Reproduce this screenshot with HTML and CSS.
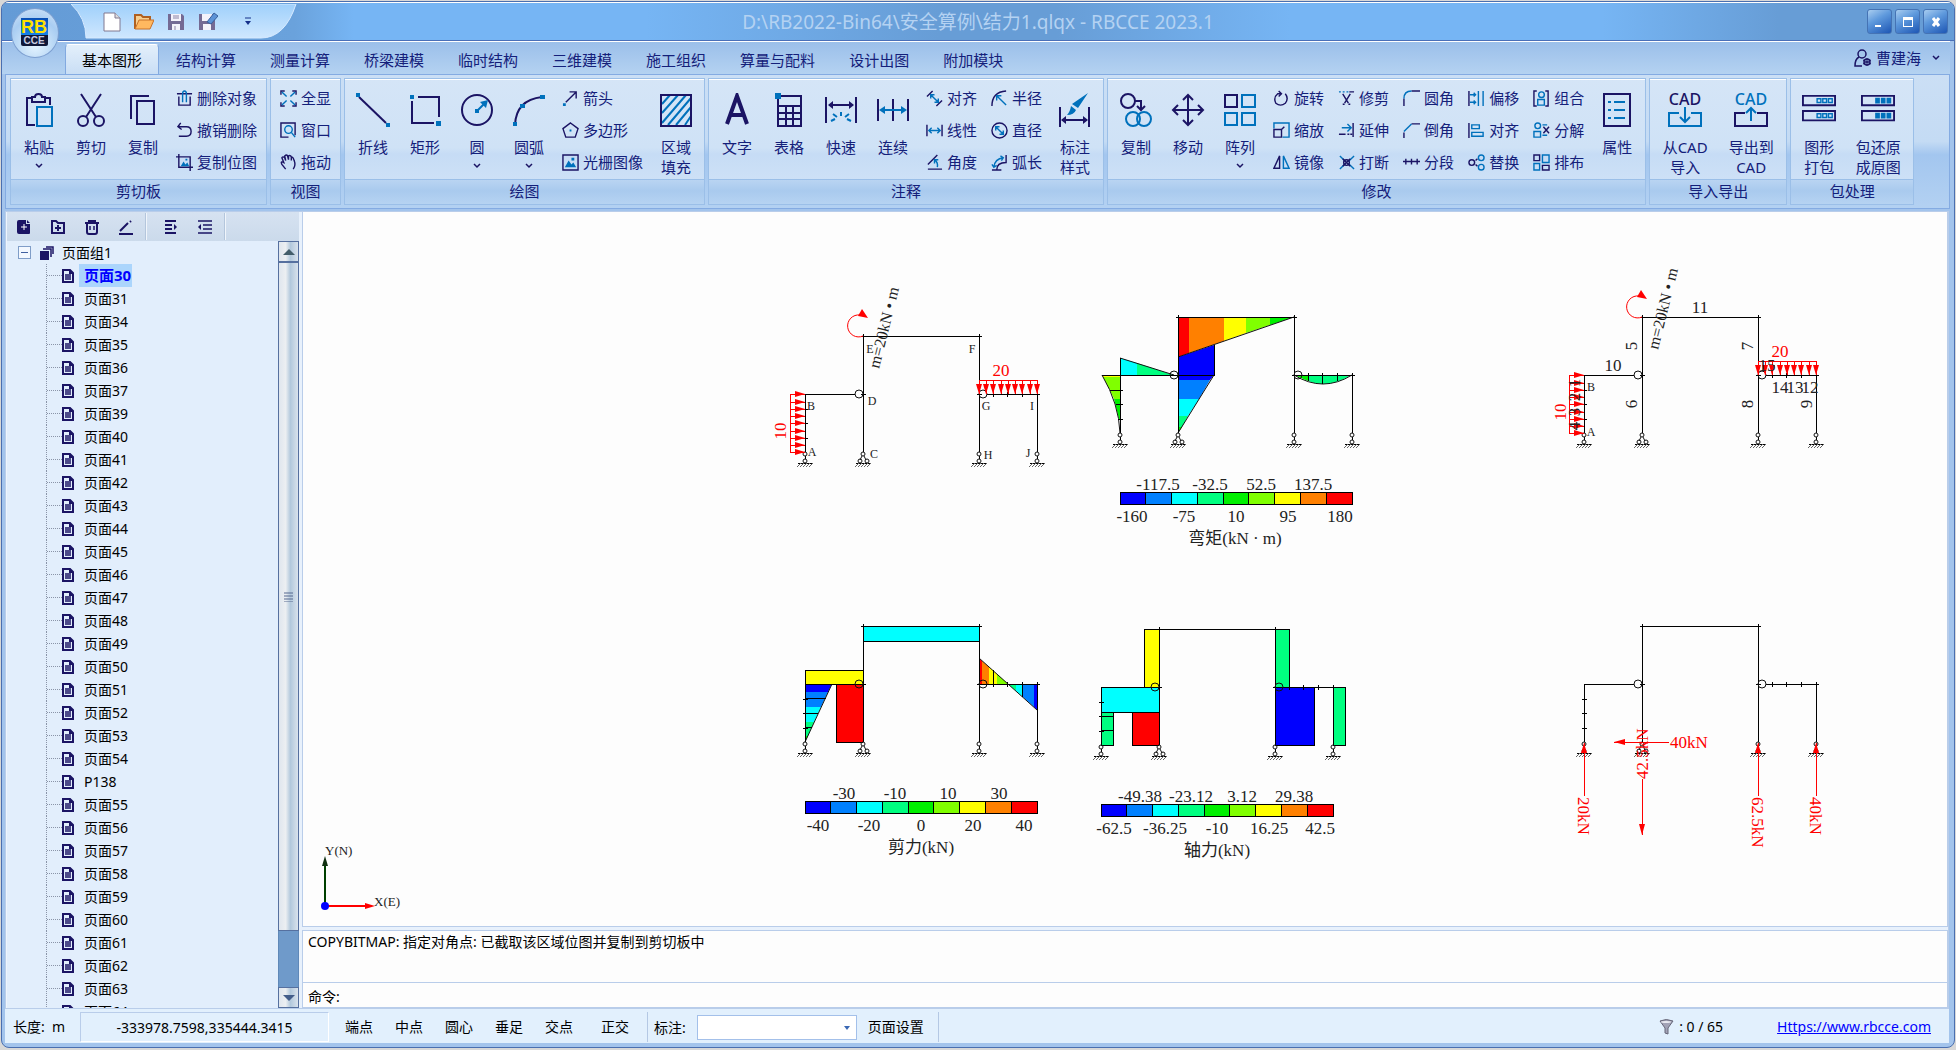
FILE: index.html
```html
<!DOCTYPE html>
<html lang="zh-CN">
<head>
<meta charset="utf-8">
<title>D:\RB2022-Bin64\安全算例\结力1.qlqx - RBCCE 2023.1</title>
<link rel="stylesheet" href="styles.css">
</head>
<body>
<svg class="sprite" aria-hidden="true">
<defs>
<!-- large ribbon icons, 34 x 34 -->
<symbol id="paste" viewBox="0 0 34 34"><path class="n" d="M9 5H5V32H13M24 5H28V12M10 9V4H13Q13 1 16.500 1T20 4H23V9Z"/><path class="b" d="M15 14H30V33H15Z"/></symbol>
<symbol id="cut" viewBox="0 0 34 34"><path class="n" d="M7 1L22 24M27 1L12 24"/><circle class="n" cx="9" cy="28" r="5"/><circle class="n" cx="25" cy="28" r="5"/></symbol>
<symbol id="copy" viewBox="0 0 34 34"><path class="n" d="M5 26V3H23M11 8H28V31H11Z"/></symbol>
<symbol id="polyline" viewBox="0 0 34 34"><path class="n" d="M3 4L30 30"/><path class="fb" d="M0 0H4V4H0ZM30 30H34V34H30Z"/></symbol>
<symbol id="rect" viewBox="0 0 34 34"><path class="n" d="M10 4H31V24M4 8V30H26"/><path class="fb" d="M2 2H6V6H2ZM28 28H33V33H28Z"/></symbol>
<symbol id="circle" viewBox="0 0 34 34"><circle class="n" cx="17" cy="17" r="15"/><path class="b" d="M17 18L26 9"/><path class="fb" d="M20 9L28 7L26 15ZM15 16H19V20H15Z"/></symbol>
<symbol id="arc" viewBox="0 0 34 34"><path class="n" d="M3 32Q4 7 30 4"/><path class="fb" d="M1 29H5V33H1ZM28 2H33V6H28ZM8 11H13V15H8Z"/></symbol>
<symbol id="hatch" viewBox="0 0 34 34"><path class="b" d="M3 11L11 2M3 20L19 2M3 30L27 2M9 32L32 5M17 32L32 14M26 32L32 23"/><path class="n" d="M2 2H32V33H2Z"/></symbol>
<symbol id="letter" viewBox="0 0 34 34"><path class="n3" d="M7 31L17 3L27 31M10 22H24"/></symbol>
<symbol id="grid" viewBox="0 0 34 34"><path class="n" d="M6 3H29V33H6ZM6 13H29M6 20H29M6 26H29M14 13V33M21 13V33"/><path class="fb" d="M3 0H9V6H3Z"/></symbol>
<symbol id="quick" viewBox="0 0 34 34"><path class="n" d="M2 4V30M32 4V30M5 12H29"/><path class="fn" d="M4 12L9 8V16ZM30 12L25 8V16Z"/><path class="b" d="M7 28L11 26M9 21L13 24M17 19V23M25 21L21 24M27 28L23 26"/></symbol>
<symbol id="chain" viewBox="0 0 34 34"><path class="n" d="M2 6V28M32 6V28M17 6V28"/><path class="b" d="M5 17H29"/><path class="fb" d="M3 17L9 13V21ZM31 17L25 13V21Z"/></symbol>
<symbol id="dimstyle" viewBox="0 0 34 34"><path class="n" d="M2 14V34M31 14V34M5 27H28"/><path class="fn" d="M3 27L8 23V31ZM30 27L25 23V31Z"/><path class="fb" d="M30 0L20 15L14 11ZM13 13L18 17Q16 22 9 22Q12 19 13 13Z"/></symbol>
<symbol id="mcopy" viewBox="0 0 34 34"><circle class="n" cx="9" cy="8" r="7"/><path class="n" d="M16 8H22V16M18 13L22 17L26 13"/><circle class="b" cx="14" cy="26" r="7"/><circle class="b" cx="25" cy="26" r="7"/></symbol>
<symbol id="move" viewBox="0 0 34 34"><path class="n" d="M17 2V32M2 17H32M12 7L17 2L22 7M12 27L17 32L22 27M7 12L2 17L7 22M27 12L32 17L27 22"/></symbol>
<symbol id="array" viewBox="0 0 34 34"><path class="n" d="M2 2H14V14H2Z"/><path class="b" d="M19 2H32V14H19ZM2 20H14V32H2ZM19 20H32V32H19Z"/></symbol>
<symbol id="props" viewBox="0 0 34 34"><path class="n" d="M4 1H30V33H4Z"/><path class="b" d="M14 9H25M14 17H25M14 25H25M8 9H11M8 17H11M8 25H11"/></symbol>
<symbol id="cadin" viewBox="0 0 34 34"><text class="cad navy" x="17" y="12">CAD</text><path class="b" d="M11 20H1V33H33V20H23M17 14V29M12 24L17 29L22 24"/></symbol>
<symbol id="cadout" viewBox="0 0 34 34"><text class="cad blue" x="17" y="12">CAD</text><path class="n" d="M11 20H1V33H33V20H23"/><path class="b" d="M17 28V15M12 20L17 15L22 20"/></symbol>
<symbol id="pack" viewBox="0 0 36 34"><path class="n" d="M1 2H35V12H1ZM1 18H35V28H1Z"/><path class="b1" d="M16 5H20V9H16ZM22 5H26V9H22ZM28 5H32V9H28ZM16 21H20V25H16ZM22 21H26V25H22ZM28 21H32V25H28Z"/></symbol>
<symbol id="unpack" viewBox="0 0 36 34"><path class="n" d="M1 2H35V12H1ZM1 18H35V28H1Z"/><path class="fb" d="M15 4H20V10H15ZM21 4H26V10H21ZM27 4H32V10H27ZM15 20H20V26H15ZM21 20H26V26H21ZM27 20H32V26H27Z"/></symbol>
<!-- small ribbon icons, 18 x 18 -->
<symbol id="del" viewBox="0 0 18 18"><path class="n1" d="M1 4H17M3 7V16H15V7"/><path class="b1" d="M7 13V4Q7 1 9 1T11 4V13"/></symbol>
<symbol id="undo" viewBox="0 0 18 18"><path class="n1" d="M5 1L2 5L6 8M2 5H11Q16 5 16 10T11 15H3"/></symbol>
<symbol id="cropimg" viewBox="0 0 18 18"><path class="n1" d="M3 0V14H18M0 3H15V18"/><path class="fb" d="M5 13L8 8L10 11L12 9L14 13ZM10 5H12V7H10Z"/></symbol>
<symbol id="full" viewBox="0 0 18 18"><path class="n1" d="M1 5V1H5M13 1H17V5M1 13V17H5M13 17H17V13"/><path class="b1" d="M2 2L7 7M16 2L11 7M2 16L7 11M16 16L11 11"/></symbol>
<symbol id="win" viewBox="0 0 18 18"><path class="n1" d="M9 16H1V1H16V14"/><circle class="b1" cx="9" cy="8" r="4"/><path class="b1" d="M12 11L16 16"/></symbol>
<symbol id="hand" viewBox="0 0 18 18"><path class="n1" d="M6 16L2 11Q0 7 4 9L2 4Q3 2 5 4L6 7L5 2Q7 0 8 2L9 6V2Q11 1 12 3L12 7M12 3Q14 3 15 7Q17 12 14 16"/></symbol>
<symbol id="arrow" viewBox="0 0 18 18"><path class="n1" d="M4 13L15 2M8 2H15V9"/><path class="fb" d="M1 14H4V17H1Z"/></symbol>
<symbol id="poly" viewBox="0 0 18 18"><path class="n1" d="M9 1L17 7L14 16H4L1 7Z"/><path class="fb" d="M8 8H10V10H8Z"/></symbol>
<symbol id="img" viewBox="0 0 18 18"><path class="n1" d="M1 1H17V17H1Z"/><path class="fb" d="M3 14L7 7L10 11L12 9L15 14ZM10 4H13V7H10Z"/></symbol>
<symbol id="dalign" viewBox="0 0 18 18"><path class="n1" d="M1 7L7 1M11 17L17 11"/><path class="b1" d="M5 5L13 13M5 9V5H9M13 9V13H9"/></symbol>
<symbol id="dlin" viewBox="0 0 18 18"><path class="n1" d="M1 3V15M17 3V15"/><path class="b1" d="M3 9H15M6 6L3 9L6 12M12 6L15 9L12 12"/></symbol>
<symbol id="dang" viewBox="0 0 18 18"><path class="n1" d="M12 1L2 11M2 16H17"/><path class="b1" d="M9 6Q13 9 12 14M9 10V6H13"/></symbol>
<symbol id="drad" viewBox="0 0 18 18"><path class="n1" d="M1 17Q1 2 16 1"/><path class="b1" d="M6 6L16 16M6 11V6H11"/></symbol>
<symbol id="ddia" viewBox="0 0 18 18"><circle class="n1" cx="9" cy="9" r="8"/><path class="b1" d="M5 5L13 13M5 9V5H9M9 13H13V9"/></symbol>
<symbol id="darc" viewBox="0 0 18 18"><path class="n1" d="M1 17H11M6 17Q6 9 16 9V1"/><path class="b1" d="M3 14Q4 5 13 4M10 2L13 4L11 7M1 11L3 14L6 12"/></symbol>
<symbol id="rot" viewBox="0 0 18 18"><path class="n1" d="M13 4Q17 9 13 14Q8 18 3 14Q0 8 5 4H9M6 1L9 4L6 7"/></symbol>
<symbol id="scale" viewBox="0 0 18 18"><path class="b1" d="M1 7V1H17V16H10"/><path class="n1" d="M1 8H9V16H1ZM9 8L12 5"/></symbol>
<symbol id="mirror" viewBox="0 0 18 18"><path class="n1" d="M7 2V15H1Z"/><path class="b1" d="M11 2V15H17Z"/></symbol>
<symbol id="trim" viewBox="0 0 18 18"><path class="b1" d="M1 2H3M5 2H7M9 2H11"/><path class="n1" d="M12 2H17M5 4L11 14M13 4L7 14M5 15H7M11 15H13"/></symbol>
<symbol id="extend" viewBox="0 0 18 18"><path class="b1" d="M4 6H13M10 2L14 6L10 10"/><path class="n1" d="M16 1V16M1 13H8M10 13H12M13 13H15"/></symbol>
<symbol id="brk" viewBox="0 0 18 18"><path class="b1" d="M2 2L8 8M17 2L11 8M2 16L8 10M17 16L11 10"/><path class="n1" d="M5 5L13 13M13 5L5 13"/><circle class="n1" cx="9" cy="9" r="3"/></symbol>
<symbol id="fillet" viewBox="0 0 18 18"><path class="n1" d="M1 17V9M9 1H18"/><path class="b1" d="M1 9Q1 1 9 1"/></symbol>
<symbol id="chamfer" viewBox="0 0 18 18"><path class="n1" d="M1 17V11M9 2H18"/><path class="b1" d="M1 10L9 2"/></symbol>
<symbol id="seg" viewBox="0 0 18 18"><path class="n1" d="M0 8H18M3 5V11M9 5V11M15 5V11"/></symbol>
<symbol id="offset" viewBox="0 0 18 18"><path class="n1" d="M1 1V17"/><path class="b1" d="M11 1V17M16 1V17M2 5H8M6 3L8 5L6 7M2 13H8M6 11L8 13L6 15"/></symbol>
<symbol id="malign" viewBox="0 0 18 18"><path class="n1" d="M1 1V17"/><path class="b1" d="M4 3H12V7H4ZM4 11H16V15H4Z"/></symbol>
<symbol id="swap" viewBox="0 0 18 18"><circle class="n1" cx="4" cy="9" r="3"/><circle class="b1" cx="14" cy="4" r="3"/><circle class="b1" cx="14" cy="14" r="3"/><path class="n1" d="M8 7L10 5M8 11L10 13"/></symbol>
<symbol id="group" viewBox="0 0 18 18"><path class="n1" d="M4 1H1V17H4M13 1H16V17H13"/><circle class="b1" cx="9" cy="5" r="3"/><path class="b1" d="M5 10H12V16H5Z"/></symbol>
<symbol id="ungroup" viewBox="0 0 18 18"><circle class="b1" cx="5" cy="4" r="3"/><path class="b1" d="M1 10H8V16H1ZM10 3H15M10 14H15"/><path class="n1" d="M11 5L17 12M17 5L11 12"/></symbol>
<symbol id="layout" viewBox="0 0 18 18"><path class="n1" d="M1 1H7V7H1ZM10 12H17V17H10Z"/><path class="b1" d="M10 1H17V9H10ZM1 10H7V17H1Z"/></symbol>
<symbol id="chev" viewBox="0 0 8 8"><path class="n1" d="M1 2L4 5L7 2"/></symbol>
<symbol id="page" viewBox="0 0 12 14"><path class="n" d="M1 1H8L11 4V13H1Z"/><path class="n1" d="M3 6H9M3 8H9M3 10H9"/><path class="fn" d="M7 0L12 5H7Z"/></symbol>

<!-- structural supports and frame, origin at the upper left corner of the frame -->
<g id="ground"><path class="k" d="M-7 0H8"/><path class="h" d="M-4 0L-8 4M-1 0L-5 4M2 0L-2 4M5 0L1 4M8 0L4 4"/></g>
<g id="link"><path class="k" d="M0 4V7"/><circle class="ka" cy="2" r="2"/><circle class="ka" cy="9" r="2"/><use href="#ground" y="11"/></g>
<g id="pin"><path class="ka" d="M-1 4L-3 8M1 4L3 8"/><circle class="ka" cy="2" r="2"/><circle class="ka" cx="-3" cy="9" r="2"/><circle class="ka" cx="4" cy="9" r="2"/><use href="#ground" y="11"/></g>
<g id="frame"><path class="k" d="M0 116V58H50M58 116V0H174V116M182 58H232V116M-2 73H3M-2 87H3M-2 102H3M188 56V61M202 56V61M217 56V61M56 0H61M58 -2V3M172 0H177M174 -2V3M172 58H177M56 58H61M230 58H235M232 56V61"/><use href="#link" y="116"/><use href="#pin" x="58" y="116"/><use href="#link" x="174" y="116"/><use href="#link" x="232" y="116"/></g>
<g id="hinges"><circle class="ka" cx="54" cy="58" r="4"/><circle class="ka" cx="178" cy="58" r="4"/></g>
<g id="ar"><path class="r" d="M-15 0H0"/><path class="fr" d="M-10 -3L0 0L-10 3Z"/></g>
<g id="ad"><path class="r" d="M0 -14V0"/><path class="fr" d="M-3 -10L0 0L3 -10Z"/></g>
<g id="loads"><path class="r" d="M-15 58V116M174 44H232"/><use href="#ar" y="58"/><use href="#ar" y="66"/><use href="#ar" y="73"/><use href="#ar" y="80"/><use href="#ar" y="87"/><use href="#ar" y="95"/><use href="#ar" y="102"/><use href="#ar" y="109"/><use href="#ar" y="116"/><use href="#ad" x="174" y="58"/><use href="#ad" x="181" y="58"/><use href="#ad" x="188" y="58"/><use href="#ad" x="196" y="58"/><use href="#ad" x="203" y="58"/><use href="#ad" x="210" y="58"/><use href="#ad" x="217" y="58"/><use href="#ad" x="225" y="58"/><use href="#ad" x="232" y="58"/><path class="ra" d="M58 0A11 11 0 1 1 55 -21"/><path class="fr" d="M53 -20L57 -27L63 -18Z"/><text class="v" transform="translate(74 33) rotate(-76)">m=20kN • m</text></g>
<g id="scalebar"><path class="c1" d="M0 0H25V12H0Z"/><path class="c2" d="M25 0H51V12H25Z"/><path class="c3" d="M51 0H77V12H51Z"/><path class="c4" d="M77 0H103V12H77Z"/><path class="c5" d="M103 0H128V12H103Z"/><path class="c6" d="M128 0H154V12H128Z"/><path class="c7" d="M154 0H180V12H154Z"/><path class="c8" d="M180 0H206V12H180Z"/><path class="c9" d="M206 0H232V12H206Z"/><path class="k" d="M0 0H232V12H0ZM25 0V12M51 0V12M77 0V12M103 0V12M128 0V12M154 0V12M180 0V12M206 0V12"/></g>
</defs>
</svg>

<div class="window">
<header class="titlebar">
  <button class="app" aria-label="RBCCE"><svg width="46" height="48"><defs><linearGradient id="lg" x2="0" y2="1"><stop stop-color="#0a4fb4"/><stop offset="1" stop-color="#1683e8"/></linearGradient></defs><rect x="9" y="9" width="27" height="28" rx="2" fill="#101838"/><path d="M9 9H36V26H9Z" fill="url(#lg)"/><text class="rb" x="22" y="24">RB</text><text class="cce" x="22" y="35">CCE</text></svg></button>
  <div class="quick">
    <svg class="quickshape" viewBox="0 0 228 35" preserveAspectRatio="none"><defs><linearGradient id="qg" x2="0" y2="1"><stop stop-color="#9fd0fb"/><stop offset="1" stop-color="#cfe7fe"/></linearGradient></defs><path d="M0 0H225Q214 34 190 34H15Q15 14 0 0Z" fill="url(#qg)" stroke="#d7eaff"/></svg>
    <button aria-label="新建"><svg width="20" height="20"><path d="M2 1H13L18 6V19H2Z" fill="#fff" stroke="#807890"/><path d="M13 1V6H18" fill="#ddd" stroke="#807890"/></svg></button>
    <button aria-label="打开"><svg width="20" height="20"><path d="M1 17V3H7L9 5H16V8" fill="#f8d090" stroke="#b06020" stroke-width="2"/><path d="M1 17L5 8H20L16 17Z" fill="#ffb860" stroke="#c87028"/></svg></button>
    <button aria-label="保存"><svg width="20" height="20"><path d="M2 2H16L18 4V18H2Z" fill="#746a94"/><path d="M5 2H15V9H5ZM6 12H14V18H6Z" fill="#f4f2fa"/><path d="M7 4H13M7 6H13M9 14V18" stroke="#8b83a6"/></svg></button>
    <button aria-label="另存为"><svg width="20" height="20"><path d="M1 2H15L17 4V18H1Z" fill="#746a94"/><path d="M4 2H14V9H4ZM5 12H13V18H5Z" fill="#f4f2fa"/><path d="M9 10L16 1L20 4L13 12Z" fill="#5c92d6" stroke="#395f9b"/></svg></button>
    <button class="more" aria-label="自定义"><svg width="8" height="9"><path d="M1 1H7" stroke="#15308a"/><path d="M1 4H7L4 8Z" fill="#15308a"/></svg></button>
  </div>
  <h1>D:\RB2022-Bin64\安全算例\结力1.qlqx - RBCCE 2023.1</h1>
  <div class="winbtns">
    <button aria-label="最小化"><svg width="12" height="12"><path d="M1 9H7V11H1Z" fill="#fff"/></svg></button>
    <button aria-label="最大化"><svg width="12" height="12"><path d="M1 1H11V11H1ZM2 4V10H10V4Z" fill="#fff" fill-rule="evenodd"/></svg></button>
    <button aria-label="关闭"><svg width="12" height="12"><path d="M3 2L9 10M9 2L3 10" stroke="#fff" stroke-width="3"/></svg></button>
  </div>
</header>

<nav class="tabs">
  <button class="on">基本图形</button><button>结构计算</button><button>测量计算</button><button>桥梁建模</button><button>临时结构</button><button>三维建模</button><button>施工组织</button><button>算量与配料</button><button>设计出图</button><button>附加模块</button>
  <button class="user"><svg width="18" height="18"><circle class="n1" cx="8" cy="5" r="4"/><path class="n1" d="M5 8Q1 10 1 17H8"/><circle class="n1" cx="13" cy="13" r="3"/><path class="d1" d="M13 9V17M9 11L17 15M17 11L9 15"/></svg>曹建海<svg class="chev"><use href="#chev"/></svg></button>
</nav>

<div class="ribbon">
  <section class="group"><div class="tools">
    <button class="big"><svg><use href="#paste"/></svg>粘贴<svg class="chev"><use href="#chev"/></svg></button>
    <button class="big"><svg><use href="#cut"/></svg>剪切</button>
    <button class="big"><svg><use href="#copy"/></svg>复制</button>
    <div class="col"><button><svg><use href="#del"/></svg>删除对象</button><button><svg><use href="#undo"/></svg>撤销删除</button><button><svg><use href="#cropimg"/></svg>复制位图</button></div>
  </div><h2>剪切板</h2></section>
  <section class="group"><div class="tools">
    <div class="col"><button><svg><use href="#full"/></svg>全显</button><button><svg><use href="#win"/></svg>窗口</button><button><svg><use href="#hand"/></svg>拖动</button></div>
  </div><h2>视图</h2></section>
  <section class="group"><div class="tools">
    <button class="big"><svg><use href="#polyline"/></svg>折线</button>
    <button class="big"><svg><use href="#rect"/></svg>矩形</button>
    <button class="big"><svg><use href="#circle"/></svg>圆<svg class="chev"><use href="#chev"/></svg></button>
    <button class="big"><svg><use href="#arc"/></svg>圆弧<svg class="chev"><use href="#chev"/></svg></button>
    <div class="col"><button><svg><use href="#arrow"/></svg>箭头</button><button><svg><use href="#poly"/></svg>多边形</button><button><svg><use href="#img"/></svg>光栅图像</button></div>
    <button class="big"><svg><use href="#hatch"/></svg>区域<br>填充</button>
  </div><h2>绘图</h2></section>
  <section class="group"><div class="tools">
    <button class="big"><svg><use href="#letter"/></svg>文字</button>
    <button class="big"><svg><use href="#grid"/></svg>表格</button>
    <button class="big"><svg><use href="#quick"/></svg>快速</button>
    <button class="big"><svg><use href="#chain"/></svg>连续</button>
    <div class="col"><button><svg><use href="#dalign"/></svg>对齐</button><button><svg><use href="#dlin"/></svg>线性</button><button><svg><use href="#dang"/></svg>角度</button></div>
    <div class="col"><button><svg><use href="#drad"/></svg>半径</button><button><svg><use href="#ddia"/></svg>直径</button><button><svg><use href="#darc"/></svg>弧长</button></div>
    <button class="big"><svg><use href="#dimstyle"/></svg>标注<br>样式</button>
  </div><h2>注释</h2></section>
  <section class="group"><div class="tools">
    <button class="big"><svg><use href="#mcopy"/></svg>复制</button>
    <button class="big"><svg><use href="#move"/></svg>移动</button>
    <button class="big"><svg><use href="#array"/></svg>阵列<svg class="chev"><use href="#chev"/></svg></button>
    <div class="col"><button><svg><use href="#rot"/></svg>旋转</button><button><svg><use href="#scale"/></svg>缩放</button><button><svg><use href="#mirror"/></svg>镜像</button></div>
    <div class="col"><button><svg><use href="#trim"/></svg>修剪</button><button><svg><use href="#extend"/></svg>延伸</button><button><svg><use href="#brk"/></svg>打断</button></div>
    <div class="col"><button><svg><use href="#fillet"/></svg>圆角</button><button><svg><use href="#chamfer"/></svg>倒角</button><button><svg><use href="#seg"/></svg>分段</button></div>
    <div class="col"><button><svg><use href="#offset"/></svg>偏移</button><button><svg><use href="#malign"/></svg>对齐</button><button><svg><use href="#swap"/></svg>替换</button></div>
    <div class="col"><button><svg><use href="#group"/></svg>组合</button><button><svg><use href="#ungroup"/></svg>分解</button><button><svg><use href="#layout"/></svg>排布</button></div>
    <button class="big"><svg><use href="#props"/></svg>属性</button>
  </div><h2>修改</h2></section>
  <section class="group"><div class="tools">
    <button class="big wide"><svg><use href="#cadin"/></svg>从CAD<br>导入</button>
    <button class="big wide"><svg><use href="#cadout"/></svg>导出到<br>CAD</button>
  </div><h2>导入导出</h2></section>
  <section class="group"><div class="tools">
    <button class="big"><svg><use href="#pack"/></svg>图形<br>打包</button>
    <button class="big wide"><svg><use href="#unpack"/></svg>包还原<br>成原图</button>
  </div><h2>包处理</h2></section>
</div>

<main>
<aside>
  <div class="treebar">
    <button aria-label="新建页面"><svg width="16" height="16"><path class="fn" d="M1 3Q1 1 3 1H10V5H14V14Q14 15 13 15H3Q1 15 1 13ZM11 1L14 4H11Z"/><path d="M8 5V11M5 8H11" stroke="#fff"/></svg></button>
    <button aria-label="新建组"><svg width="16" height="16"><path class="n" d="M2 2H6L8 4H14V14H2ZM8 6V12M5 9H11"/></svg></button>
    <button aria-label="删除"><svg width="16" height="16"><path class="n" d="M1 4H15M3 4V13Q3 15 5 15H11Q13 15 13 13V4M5 4V2H11V4"/><path class="n1" d="M6 7V11M10 7V11"/></svg></button>
    <button aria-label="编辑"><svg width="16" height="16"><path class="n" d="M1 15H15M2 12L10 4M12 3L13 2"/></svg></button>
    <i></i>
    <button aria-label="缩进"><svg width="16" height="16"><path class="n" d="M2 2H13M2 6H9M2 10H9M2 14H13"/><path class="fn" d="M11 5L14 8L11 11Z"/></svg></button>
    <button aria-label="凸出"><svg width="16" height="16"><path class="n1" d="M1 2H15M6 6H15M6 10H15M1 14H15"/><path class="fn" d="M4 5L1 8L4 11Z"/></svg></button>
    <i class="last"></i>
  </div>
  <div class="treewrap">
    <div class="tree">
      <a class="root" href="#"><span class="minus"></span><svg width="14" height="14"><path class="fn" d="M0 5H9V14H0Z"/><path class="n1" d="M3 3H11V11M6 1H13V8"/></svg>页面组1</a>
      <ul>
        <li class="sel"><a href="#"><svg><use href="#page"/></svg><span>页面30</span></a></li>
        <li><a href="#"><svg><use href="#page"/></svg><span>页面31</span></a></li>
        <li><a href="#"><svg><use href="#page"/></svg><span>页面34</span></a></li>
        <li><a href="#"><svg><use href="#page"/></svg><span>页面35</span></a></li>
        <li><a href="#"><svg><use href="#page"/></svg><span>页面36</span></a></li>
        <li><a href="#"><svg><use href="#page"/></svg><span>页面37</span></a></li>
        <li><a href="#"><svg><use href="#page"/></svg><span>页面39</span></a></li>
        <li><a href="#"><svg><use href="#page"/></svg><span>页面40</span></a></li>
        <li><a href="#"><svg><use href="#page"/></svg><span>页面41</span></a></li>
        <li><a href="#"><svg><use href="#page"/></svg><span>页面42</span></a></li>
        <li><a href="#"><svg><use href="#page"/></svg><span>页面43</span></a></li>
        <li><a href="#"><svg><use href="#page"/></svg><span>页面44</span></a></li>
        <li><a href="#"><svg><use href="#page"/></svg><span>页面45</span></a></li>
        <li><a href="#"><svg><use href="#page"/></svg><span>页面46</span></a></li>
        <li><a href="#"><svg><use href="#page"/></svg><span>页面47</span></a></li>
        <li><a href="#"><svg><use href="#page"/></svg><span>页面48</span></a></li>
        <li><a href="#"><svg><use href="#page"/></svg><span>页面49</span></a></li>
        <li><a href="#"><svg><use href="#page"/></svg><span>页面50</span></a></li>
        <li><a href="#"><svg><use href="#page"/></svg><span>页面51</span></a></li>
        <li><a href="#"><svg><use href="#page"/></svg><span>页面52</span></a></li>
        <li><a href="#"><svg><use href="#page"/></svg><span>页面53</span></a></li>
        <li><a href="#"><svg><use href="#page"/></svg><span>页面54</span></a></li>
        <li><a href="#"><svg><use href="#page"/></svg><span>P138</span></a></li>
        <li><a href="#"><svg><use href="#page"/></svg><span>页面55</span></a></li>
        <li><a href="#"><svg><use href="#page"/></svg><span>页面56</span></a></li>
        <li><a href="#"><svg><use href="#page"/></svg><span>页面57</span></a></li>
        <li><a href="#"><svg><use href="#page"/></svg><span>页面58</span></a></li>
        <li><a href="#"><svg><use href="#page"/></svg><span>页面59</span></a></li>
        <li><a href="#"><svg><use href="#page"/></svg><span>页面60</span></a></li>
        <li><a href="#"><svg><use href="#page"/></svg><span>页面61</span></a></li>
        <li><a href="#"><svg><use href="#page"/></svg><span>页面62</span></a></li>
        <li><a href="#"><svg><use href="#page"/></svg><span>页面63</span></a></li>
        <li><a href="#"><svg><use href="#page"/></svg><span>页面64</span></a></li>
      </ul>
    </div>
    <div class="scroll">
      <button aria-label="向上"><svg width="12" height="6"><path d="M0 6L6 0L12 6Z" fill="#435d6a"/></svg></button>
      <div class="thumb"><svg width="9" height="10"><path d="M0 1H9M0 4H9M0 7H9M0 10H9" stroke="#56698f"/></svg></div>
      <div class="track"></div>
      <button aria-label="向下"><svg width="12" height="6"><path d="M0 0L6 6L12 0Z" fill="#435d8a"/></svg></button>
    </div>
  </div>
</aside>

<div class="work">
<div class="canvas">
<svg class="drawing">
<g transform="translate(-303 -212)">
  <!-- structure with loads and node names -->
  <g transform="translate(805 336)"><use href="#frame"/><use href="#hinges"/><use href="#loads"/></g>
  <g class="node"><text x="870" y="353">E</text><text x="972" y="353">F</text><text x="872" y="405">D</text><text x="811" y="410">B</text><text x="986" y="410">G</text><text x="1032" y="410">I</text><text x="812" y="456">A</text><text x="874" y="458">C</text><text x="988" y="459">H</text><text x="1028" y="457">J</text></g>
  <g class="red"><text x="1001" y="376">20</text><text transform="translate(786 431) rotate(-90)">10</text></g>

  <!-- bending moment -->
  <g transform="translate(1120 317)">
    <path class="c9" d="M58 0H69V36L58 40Z"/><path class="c8" d="M69 0H104V24L69 36Z"/><path class="c7" d="M104 0H126V16L104 24Z"/><path class="c6" d="M126 0H150V8L126 16Z"/><path class="c5" d="M150 0H174L150 8Z"/>
    <path class="c1" d="M58 40L94 28V58L90 63H58Z"/><path class="c2" d="M58 63H90L79 82H58Z"/><path class="c3" d="M58 82H79L68 99H58Z"/><path class="c4" d="M58 99H68L62 110H58Z"/><path class="c5" d="M58 110H62L58 116Z"/>
    <path class="c3" d="M0 41L17 46V58H0Z"/><path class="c4" d="M17 46L53 58H17Z"/>
    <path class="c7" d="M-18 58H0V60H-17Z"/><path class="c6" d="M-17 60H0V82H-6L-10 73Z"/><path class="c5" d="M-6 82H0V102H-1Z"/>
    <path class="c5" d="M174 58H188V64Z"/><path class="c4" d="M188 58H231Q217 67 202 67Q195 67 188 64Z"/>
    <path class="ka" d="M58 40L174 0M58 116L94 58M0 41L54 58M-18 58Q-1 87 0 116M174 58Q203 76 232 58"/>
    <path class="k" d="M94 28V58H50M0 41V58H-18M-10 73H0M-4 87H0M188 58V64M202 58V67M217 58V64M174 58H182"/>
    <use href="#frame"/><use href="#hinges"/>
  </g>
  <g transform="translate(1120 492)" class="legend"><use href="#scalebar"/><text x="38" y="-2">-117.5</text><text x="90" y="-2">-32.5</text><text x="141" y="-2">52.5</text><text x="193" y="-2">137.5</text><text x="12" y="30">-160</text><text x="64" y="30">-75</text><text x="116" y="30">10</text><text x="168" y="30">95</text><text x="220" y="30">180</text><text x="115" y="52">弯矩(kN · m)</text></g>

  <!-- structure with member numbers -->
  <g transform="translate(1584 317)"><use href="#frame"/><use href="#hinges"/><use href="#loads"/></g>
  <g class="node"><text x="1591" y="391">B</text><text x="1591" y="436">A</text></g>
  <g class="legend"><text x="1700" y="313">11</text><text x="1613" y="371">10</text><text x="1767" y="371">15</text><text x="1780" y="393">14</text><text x="1795" y="393">13</text><text x="1810" y="393">12</text><text transform="translate(1637 346) rotate(-90)">5</text><text transform="translate(1637 404) rotate(-90)">6</text><text transform="translate(1753 346) rotate(-90)">7</text><text transform="translate(1753 404) rotate(-90)">8</text><text transform="translate(1812 404) rotate(-90)">9</text><text transform="translate(1580 383) rotate(-90)">1</text><text transform="translate(1580 397) rotate(-90)">2</text><text transform="translate(1580 412) rotate(-90)">3</text><text transform="translate(1580 426) rotate(-90)">4</text></g>
  <g class="red"><text x="1780" y="357">20</text><text transform="translate(1566 412) rotate(-90)">10</text></g>

  <!-- shear force -->
  <g transform="translate(805 626)">
    <path class="c3" d="M58 0H174V15H58Z"/><path class="c7" d="M0 44H58V58H0Z"/><path class="c9" d="M31 58H58V116H31Z"/>
    <path class="c1" d="M0 58H27L23 66H0Z"/><path class="c2" d="M0 66H23L16 81H0Z"/><path class="c3" d="M0 81H16L9 96H0Z"/><path class="c4" d="M0 96H9L3 110H0Z"/><path class="c5" d="M0 110H3L0 116Z"/>
    <path class="c9" d="M174 32L177 35V58H174Z"/><path class="c8" d="M177 35L184 41V58H177Z"/><path class="c7" d="M184 41L192 48V58H184Z"/><path class="c6" d="M192 48L203 58H192Z"/>
    <path class="c4" d="M203 58H211V65Z"/><path class="c3" d="M211 58H218V71L211 65Z"/><path class="c2" d="M218 58H229V81L218 71Z"/><path class="c1" d="M229 58H232V84L229 81Z"/>
    <path class="ka" d="M27 58L0 116M174 32L232 84"/>
    <path class="k" d="M58 15H174M0 58V44H58M31 58V116H58M50 58H58M0 72H21M0 87H13M0 101H7M188 44V58M217 58V71M232 58V84M174 58H182"/>
    <use href="#frame"/><use href="#hinges"/>
  </g>
  <g transform="translate(805 801)" class="legend"><use href="#scalebar"/><text x="39" y="-2">-30</text><text x="90" y="-2">-10</text><text x="143" y="-2">10</text><text x="194" y="-2">30</text><text x="13" y="30">-40</text><text x="64" y="30">-20</text><text x="116" y="30">0</text><text x="168" y="30">20</text><text x="219" y="30">40</text><text x="116" y="52">剪力(kN)</text></g>

  <!-- axial force -->
  <g transform="translate(1101 629)">
    <path class="c7" d="M43 0H58V58H43Z"/><path class="c4" d="M174 0H188V58H174ZM0 83H12V116H0ZM232 58H244V116H232Z"/><path class="c3" d="M0 58H58V83H0Z"/><path class="c9" d="M31 83H58V116H31Z"/><path class="c1" d="M174 58H213V116H174Z"/>
    <path class="k" d="M58 0H43V58M174 0H188V58M0 83H58M12 83V116H0M31 83V116H58M174 116H213V58M232 58H244V116H232M0 87H12M0 101H12M50 58H58M174 58H182"/>
    <use href="#frame"/><use href="#hinges"/>
  </g>
  <g transform="translate(1101 804)" class="legend"><use href="#scalebar"/><text x="39" y="-2">-49.38</text><text x="90" y="-2">-23.12</text><text x="141" y="-2">3.12</text><text x="193" y="-2">29.38</text><text x="13" y="30">-62.5</text><text x="64" y="30">-36.25</text><text x="116" y="30">-10</text><text x="168" y="30">16.25</text><text x="219" y="30">42.5</text><text x="116" y="52">轴力(kN)</text></g>

  <!-- support reactions -->
  <g transform="translate(1584 626)"><use href="#frame"/><use href="#hinges"/>
    <path class="r" d="M0 117V170M174 117V170M232 117V170M58 153V209M85 116H30"/>
    <path class="fr" d="M0 117L3 127H-3ZM174 117L177 127H171ZM232 117L235 127H229ZM58 209L55 198H61ZM30 116L41 113V119Z"/>
  </g>
  <g class="red start"><text x="1670" y="748">40kN</text><text transform="translate(1648 779) rotate(-90)">42.5kN</text><text transform="translate(1578 797) rotate(90)">20kN</text><text transform="translate(1752 797) rotate(90)">62.5kN</text><text transform="translate(1810 797) rotate(90)">40kN</text></g>

  <!-- coordinate axes -->
  <path d="M325 906V862" stroke="#004000" stroke-width="2"/><path d="M322 866L325 856L328 866Z" fill="#103010"/>
  <path d="M325 906H368" stroke="#f00" stroke-width="2"/><path class="fr" d="M365 903L375 906L365 909Z"/><circle cx="325" cy="906" r="4" fill="#00f"/>
  <g class="axis"><text x="325" y="855">Y(N)</text><text x="374" y="906">X(E)</text></g>
</g>
</svg>
</div>
<div class="command">
  <p>COPYBITMAP: 指定对角点: 已截取该区域位图并复制到剪切板中</p>
  <div class="prompt"><label for="cmd">命令:</label><input id="cmd" type="text"></div>
</div>
</div>
</main>

<footer>
  <span class="unit">长度:&nbsp; m</span>
  <span class="coords">-333978.7598,335444.3415</span>
  <div class="snaps"><button>端点</button><button>中点</button><button>圆心</button><button>垂足</button><button>交点</button><button>正交</button></div>
  <label class="dim" for="dim">标注:</label>
  <div class="combo"><select id="dim"><option></option></select><svg width="6" height="4"><path d="M0 0H6L3 4Z" fill="#3a68b4"/></svg></div>
  <button class="setup">页面设置</button>
  <span class="filter"><svg width="15" height="16"><path d="M1 2Q7 -1 14 2L9 9V15L6 14V9Z" fill="#a2a2b6" stroke="#666678"/><ellipse cx="7" cy="3" rx="5" ry="1" fill="#e8e8f0"/></svg>: 0 / 65</span>
  <a class="site" href="#">Https://www.rbcce.com</a>
</footer>
</div>
</body>
</html>
```
FILE: styles.css
```css
* { box-sizing: border-box; }
body {
  margin: 0; height: 100vh; padding: 1px 1px 2px 1px; background: #d8d8d8;
  font: 15px/20px "Noto Sans", "Noto Sans CJK SC", sans-serif; color: #14207a;
  display: flex;
}
button { font: inherit; color: inherit; border: 0; padding: 0; margin: 0; background: none; white-space: nowrap; }
svg { display: block; flex: none; }
.sprite { position: absolute; width: 0; height: 0; }

.window {
  flex: 1; min-width: 0; display: flex; flex-direction: column;
  border: 1px solid #4a6fb0; border-radius: 8px; overflow: hidden; background: #a3c4ec;
}

/* icon strokes */
.n, .n1, .n3, .b, .b1, .d1 { fill: none; stroke: #1b1464; stroke-width: 2; }
.n1, .b1 { stroke-width: 1.5; }
.d1 { stroke-width: 1; }
.n3 { stroke-width: 4; }
.b, .b1 { stroke: #0071bc; }
.fn { fill: #1b1464; }
.fb { fill: #0071bc; }
.cad { font: 500 16px "Noto Sans", sans-serif; text-anchor: middle; }
.navy { fill: #1b1464; }
.blue { fill: #0071bc; }

/* title bar */
.titlebar {
  height: 39px; position: relative; display: flex; align-items: center; z-index: 1;
  border-top: 1px solid #fff; border-bottom: 1px solid #4a6fb8;
  background: linear-gradient(90deg, #649bd6 0, #6aa2dc 15%, #76b5f4 18%, #76b5f4 33%, #679dd6 48%, #679dd6 54%, #76b5f4 66%, #76b5f4 82%, #679dd6 91%);
}
.app {
  position: absolute; left: 9px; top: 5px; width: 48px; height: 50px; border-radius: 50%;
  border: 1px solid #7d9fd0; background: radial-gradient(circle at 50% 75%, #e6f5ff, #a9cdf2 60%, #d5e6f8);
}
.rb { font: bold 18px "Liberation Sans", sans-serif; fill: #ffe100; text-anchor: middle; }
.cce { font: bold 10px "Liberation Sans", sans-serif; fill: #c8cce0; text-anchor: middle; }
.quick { position: relative; margin-left: 69px; width: 228px; height: 35px; display: flex; align-items: center; gap: 12px; padding-left: 31px; }
.quickshape { position: absolute; inset: 0; width: 100%; height: 100%; }
.quick button { position: relative; }
.quick .more { margin-left: 14px; }
h1 { flex: 1; margin: 0; font: 19px/36px "Noto Sans", "Noto Sans CJK SC", sans-serif; color: #b4d2f2; text-align: center; padding-right: 210px; white-space: nowrap; }
.winbtns { display: flex; gap: 3px; padding-right: 6px; }
.winbtns button {
  width: 25px; height: 25px; border-radius: 3px; display: grid; place-items: center;
  border: 1px solid #4573b4; background: linear-gradient(150deg, #a9cdf0 0, #5f9add 40%, #1d56b4);
}

/* tabs */
.tabs {
  height: 33px; display: flex; align-items: flex-end; padding-left: 63px; padding-right: 9px; margin: 0 4px 0 0;
  border-top: 1px solid #fff; background: linear-gradient(#9bbfea, #b4d2f1);
}
.tabs button { height: 30px; padding: 1px 16px 0; border: 1px solid transparent; border-bottom: 0; }
.tabs .on { color: #000; background: linear-gradient(#e3effb, #c9def5); border-color: #82a9e0; border-radius: 4px 4px 0 0; border-top-color: #fff; }
.tabs .user { margin-left: auto; display: flex; align-items: center; gap: 4px; padding: 0 0 4px; }
.user .chev { width: 8px; height: 8px; margin-left: 7px; }

/* ribbon */
.ribbon {
  margin: 0 4px 2px 3px; padding: 3px 4px 3px; display: flex; gap: 3px;
  border: 1px solid #84abe2; background: linear-gradient(#cbdff5 0, #c4dbf4 50%, #a3c6ef 60%, #b3d1f2);
}
.group { border: 1px solid #9bbfe8; display: flex; flex-direction: column; background: linear-gradient(#d5e5f7, #cfe2f6 55%, #c6dcf5 60%, #d4e5f8); }
.tools { height: 100px; padding: 0 2px; display: flex; border-top: 1px solid #fff; }
.group h2 { margin: 0; height: 25px; font: inherit; line-height: 22px; text-align: center; background: linear-gradient(#b9d4f2, #a9caee 45%, #b6d3f2); border-top: 1px solid #9bbfe8; }
.big { width: 52px; padding-top: 13px; display: block; text-align: center; align-self: flex-start; }
.wide { width: 66px; }
.big > svg { width: 34px; height: 34px; margin: 0 auto 10px; }
.big > .chev { width: 8px; height: 8px; margin: 5px auto 0; }
.col { padding-top: 2px; display: flex; flex-direction: column; }
.col button { height: 32px; padding: 0 7px; display: flex; align-items: center; gap: 4px; }
.col svg { width: 17px; height: 17px; }

/* page tree */
main { flex: 1; min-height: 0; display: flex; margin: 0 5px 0 3px; border: 1px solid #b9cdea; border-bottom: 0; }
aside { width: 293px; display: flex; flex-direction: column; background: #e2eefc; border-left: 1px solid #eef5fd; }
.treebar { height: 29px; display: flex; align-items: center; background: linear-gradient(#d6e2f1, #cbdaeb); }
.treebar button { width: 34px; height: 28px; display: grid; place-items: center; }
.treebar i { width: 2px; height: 27px; margin: 0 7px 0 2px; border-left: 1px solid #b4c6dc; background: #f0f5fb; }
.treebar .last { margin-right: 0; }
.treewrap { flex: 1; min-height: 0; display: flex; font-size: 14px; color: #000; }
.tree { flex: 1; overflow: hidden; }
.tree a { color: inherit; text-decoration: none; height: 23px; display: flex; align-items: center; }
.root { padding-left: 11px; }
.root svg { margin: 0 8px 0 1px; }
.minus { width: 13px; height: 13px; border: 1px solid #7f9dc8; background: linear-gradient(#4060a0, #4060a0) center / 7px 1px no-repeat #f3f8ff; margin-right: 8px; }
ul { margin: 0; padding: 0 0 0 39px; list-style: none; }
li { border-left: 1px dotted #8a94a8; }
li a::before { content: ""; width: 15px; border-top: 1px dotted #8a94a8; }
li svg { width: 12px; height: 14px; margin-right: 5px; }
li span { padding: 0 4px 0 5px; line-height: 23px; }
.sel span { background: #abd5fc; color: #00f; font-size: 15px; font-weight: bold; padding: 0 1px 0 5px; }

.scroll { width: 21px; display: flex; flex-direction: column; }
.scroll button, .thumb { border: 1px solid #56709f; background: linear-gradient(90deg, #dfe6ee, #eceff2 35%, #b2c8dc 60%, #d9e2ec); display: grid; place-items: center; }
.scroll button { height: 21px; }
.thumb { flex: 12; }
.track { flex: 1; background: #6f9aca; border: 1px solid #5f88b8; border-width: 0 1px; }

/* drawing and command area */
.work { flex: 1; min-width: 0; display: flex; flex-direction: column; gap: 3px; background: #e8f1fc; }
.canvas { flex: 1; min-height: 0; background: #fdfdfd; margin-left: 3px; border: 1px solid #b9cdea; border-top: 0; }
.drawing { width: 100%; height: 100%; }
.drawing text { font: 16px "Liberation Serif", "Noto Sans CJK SC", serif; fill: #222; }
.command { margin-left: 3px; height: 78px; display: flex; flex-direction: column; background: #fdfdfd; border: 1px solid #b9cdea; color: #000; font-size: 14px; }
.command p { flex: 1; margin: 0; padding: 1px 5px; border-bottom: 1px solid #b9cdea; }
.prompt { height: 24px; display: flex; align-items: center; padding: 3px 5px 0; }
.prompt input { flex: 1; border: 0; outline: 0; background: none; font: inherit; }

.k { fill: none; stroke: #000; shape-rendering: crispEdges; }
.h { fill: none; stroke: #666; }
.ka { fill: none; stroke: #111; }
.r { fill: none; stroke: #f00; shape-rendering: crispEdges; }
.ra { fill: none; stroke: #f00; }
.fr { fill: #f00; }
.c1 { fill: #0000ff; } .c2 { fill: #0080ff; } .c3 { fill: #00ffff; }
.c4 { fill: #00ff80; } .c5 { fill: #00f000; } .c6 { fill: #80ff00; }
.c7 { fill: #ffff00; } .c8 { fill: #ff8000; } .c9 { fill: #ff0000; }
.drawing .legend text, .drawing .red text { font-size: 17px; text-anchor: middle; }
.drawing .red text { fill: #f00; }
.drawing .start text { text-anchor: start; }
.drawing .node text { font-size: 12px; text-anchor: middle; }
.drawing .axis text { font-size: 13px; }
text.v { font: 16px "Liberation Serif", serif; fill: #222; }

/* status bar */
footer { height: 35px; margin: 0 5px 4px 3px; padding: 3px 0 1px 8px; display: flex; align-items: center; background: #e2f0fd; border-top: 1px solid #b9cdea; color: #000; font-size: 14px; }
.unit { width: 67px; }
.coords { align-self: stretch; width: 249px; line-height: 29px; text-align: center; border: 1px solid #fff; border-top-color: #b9cdea; border-left-color: #b9cdea; }
.snaps { display: flex; gap: 22px; padding: 0 18px 0 16px; }
.snaps button:last-child { margin-left: 6px; }
.dim { align-self: stretch; line-height: 31px; padding: 0 11px 0 6px; border-left: 1px solid #b4c8e4; }
.combo { position: relative; width: 160px; height: 25px; }
.combo select { width: 100%; height: 100%; appearance: none; border: 1px solid #a3c0ea; background: #fff; }
.combo svg { position: absolute; right: 7px; top: 11px; }
.setup { align-self: stretch; padding: 0 14px 0 11px; border-right: 1px solid #b4c8e4; }
.filter { margin-left: auto; display: flex; align-items: center; gap: 5px; margin-right: 54px; }
.site { color: #00f; margin-right: 18px; }
```
